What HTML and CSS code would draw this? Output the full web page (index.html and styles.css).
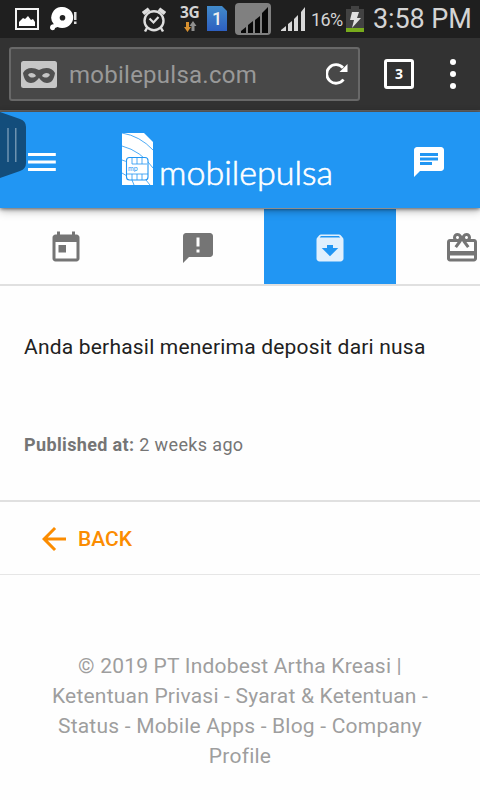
FILE: index.html
```html
<!DOCTYPE html>
<html lang="id">
<head>
<meta charset="utf-8">
<title>mobilepulsa</title>
<link rel="stylesheet" href="styles.css">
</head>
<body>
<div class="status">
  <svg class="s-picture" width="24" height="22" viewBox="0 0 24 22"><path d="M1 1h22v20H1z" fill="none" stroke="#f4f4f4" stroke-width="2"/><path d="M4 18v-4l4-4 2 1 3-3 3 4 2-1 2 3v4z" fill="#fff"/></svg>
  <svg class="s-disc" width="28" height="24" viewBox="0 0 28 24" fill="#fff"><path d="M12.500 0a11 10.500 0 1 1-5 20L5 21c0 3-5 3-5-.5 0-3 3-3.500 4-3A10.500 10.500 0 0 1 12.500 0z"/><circle cx="12.500" cy="10.700" r="2.800" fill="#222"/><path d="M24 5h2.500v8H24zM24 14.500h2.500V17H24z" fill="#ddd"/></svg>
  <svg class="s-alarm" width="24" height="26" viewBox="0 0 24 26" fill="none" stroke="#dedede"><circle cx="12" cy="13.700" r="9.500" stroke-width="2.400"/><path d="M1 6.500l6-4.500M17 2l6 4.500" stroke-width="4"/><path d="M7.500 11.500l4 4 5-5.500" stroke-width="2.200"/><path d="M5 21l-2 3.500M19 21l2 3.500" stroke-width="2.500"/></svg>
  <div class="network"><span>3G</span><svg width="16" height="12" viewBox="0 0 16 12"><path d="M4 1h3v5h2l-3.500 5L2 6h2z" fill="#d9912f"/><path d="M9.500 10h3V5h2L11 0 7.500 5h2z" fill="#909090"/></svg></div>
  <div class="sim">1</div>
  <svg class="s-sigbox" width="36" height="32" viewBox="0 0 36 32"><rect width="36" height="32" rx="4" fill="#808080"/><path d="M6 30v-2l5-4v6zm7 0v-8l5-4v12zm7 0V17l5-4v17zm7 0V10l6-6v26z" fill="#080808"/></svg>
  <svg class="s-signal" width="25" height="24" viewBox="0 0 25 24"><path d="M0 24v-1l5-4v5zm7 0v-7l4-3v10zm6 0V12l4-4v16zm7 0V5l4-5v24z" fill="#d8d8d8"/></svg>
  <span class="percent">16%</span>
  <svg class="s-battery" width="18" height="26" viewBox="0 0 18 26"><path d="M5 0h8v3h5v20H0V3h5z" fill="#424242"/><path d="M0 22h18v4H0z" fill="#78ab1c"/><path d="M6 6h7l-2 6h4L6 22l2-8H4z" fill="#e0e0e0"/></svg>
  <span class="clock">3:58 PM</span>
</div>
<div class="browser">
  <div class="address">
    <svg width="36" height="27" viewBox="0 0 36 27"><rect width="36" height="27" rx="2.500" fill="#c6c6c6"/><path d="M2 12c3-6 10-6 16-3 6-3 13-3 16 3-1 6-3 10-8 10-4 0-6-3-8-5-2 2-4 5-8 5-5 0-7-4-8-10z" fill="#505050"/><path d="M7 14c1-2.500 6-3 8 1-3 2.500-6 2-8-1zm22 0c-1-2.500-6-3-8 1 3 2.500 6 2 8-1z" fill="#c6c6c6"/></svg>
    <span class="url">mobilepulsa.com</span>
    <svg class="reload" width="23" height="22" viewBox="0 0 23 22"><path d="M17.500 16.500A9.300 9.300 0 1 1 17 4.800" fill="none" stroke="#fff" stroke-width="2.800"/><path d="M21.500 1v8h-8z" fill="#fff"/></svg>
  </div>
  <div class="count">3</div>
  <div class="dots"><i></i><i></i><i></i></div>
</div>
<header class="appbar">
  <svg class="drawer" width="27" height="66" viewBox="0 0 27 66"><path d="M0 0l20 7q6 2 6 8v36q0 6-6 8L0 66z" fill="#134d7b"/><path d="M8 16v34M15.800 16v34" stroke="#85a5be" stroke-width="1.200"/></svg>
  <svg class="menu" width="36" height="36" viewBox="0 0 24 24"><path fill="#fff" d="M2.700 18h18.500v-2H2.700v2zm0-5h18.500v-2H2.700v2zm0-7v2h18.500V6H2.700z"/></svg>
  <div class="brand">
    <svg width="32" height="52" viewBox="0 0 32 52"><path d="M0 0h22l9 9v43H0z" fill="#fff"/><g fill="none" stroke="#2196f3" stroke-width=".8"><path d="M0 0q18 3 31 17M0 13q19 5 31 22M0 27q4 1 6 3M0 40l5 3M10 47l2 5M24 47l4 5"/><rect x="4.500" y="24.500" width="21.500" height="22.500" rx="3" fill="#fff" stroke-width="1.100"/><path d="M10 25v6h15M15 25v6M20 25v6M5 41h21M10 41v6M15 41v6M20 41v6"/></g><text x="6" y="37.500" font-family="Lato" font-size="7" fill="#2196f3">mp</text></svg>
    <svg class="wordmark" width="178" height="48" viewBox="0 0 178 48"><text x="0" y="33" textLength="174" lengthAdjust="spacingAndGlyphs" font-family="Lato" font-weight="300" font-size="33" fill="#fff" stroke="#fff" stroke-width=".6">mobilepulsa</text></svg>
  </div>
  <svg class="chat" width="36" height="36" viewBox="0 0 24 24"><path fill="#fff" d="M20 2H4c-1.100 0-1.990.9-1.990 2L2 22l4-4h14c1.100 0 2-.9 2-2V4c0-1.100-.9-2-2-2zM6 9h12v2H6V9zm8 5H6v-2h8v2zm4-6H6V6h12v2z"/></svg>
</header>
<nav class="tabs">
  <div class="tab"><svg viewBox="0 0 24 24"><path d="M19 3h-1V1h-2v2H8V1H6v2H5c-1.110 0-1.990.9-1.990 2L3 19c0 1.100.89 2 2 2h14c1.100 0 2-.9 2-2V5c0-1.100-.9-2-2-2zm0 16H5V8h14v11zM7 10h5v5H7z"/></svg></div>
  <div class="tab"><svg viewBox="0 0 24 24"><path d="M20 2H4c-1.100 0-1.990.9-1.990 2L2 22l4-4h14c1.100 0 2-.9 2-2V4c0-1.100-.9-2-2-2zm-7 9h-2V5h2v6zm0 4h-2v-2h2v2z"/></svg></div>
  <div class="tab active"><svg viewBox="0 0 24 24"><path d="M20.540 5.230l-1.390-1.680C18.880 3.210 18.470 3 18 3H6c-.47 0-.88.21-1.160.55L3.460 5.230C3.170 5.570 3 6.020 3 6.500V19c0 1.100.9 2 2 2h14c1.100 0 2-.9 2-2V6.500c0-.48-.17-.93-.46-1.270zM12 17.500L6.500 12H10v-2h4v2h3.500L12 17.500zM5.120 5l.81-1h12l.94 1H5.120z"/></svg></div>
  <div class="tab last"><svg viewBox="0 0 24 24"><path d="M20 6h-2.180c.11-.31.18-.65.18-1 0-1.660-1.340-3-3-3-1.050 0-1.960.54-2.500 1.350l-.5.67-.5-.68C10.960 2.540 10.050 2 9 2 7.340 2 6 3.340 6 5c0 .35.07.69.18 1H4c-1.110 0-1.990.89-1.990 2L2 19c0 1.110.89 2 2 2h16c1.110 0 2-.89 2-2V8c0-1.110-.89-2-2-2zm-5-2c.55 0 1 .45 1 1s-.45 1-1 1-1-.45-1-1 .45-1 1-1zM9 4c.55 0 1 .45 1 1s-.45 1-1 1-1-.45-1-1 .45-1 1-1zm11 15H4v-2h16v2zm0-5H4V8h5.080L7 10.830 8.620 12 11 8.760l1-1.360 1 1.360L15.380 12 17 10.830 14.920 8H20v6z"/></svg></div>
</nav>
<main class="message">
  <p class="body">Anda berhasil menerima deposit dari nusa</p>
  <p class="published"><b>Published at:</b> 2 weeks ago</p>
</main>
<a class="back"><svg width="36" height="36" viewBox="0 0 24 24"><path fill="#fb8c00" d="M20 11H7.830l5.590-5.590L12 4l-8 8 8 8 1.410-1.410L7.830 13H20v-2z"/></svg><span>BACK</span></a>
<footer class="footer">© 2019 PT Indobest Artha Kreasi |<br>Ketentuan Privasi - Syarat &amp; Ketentuan -<br>Status - Mobile Apps - Blog - Company<br>Profile</footer>
</body>
</html>
```
FILE: styles.css
```css
* { box-sizing: border-box; }
body { margin: 0; width: 480px; height: 800px; overflow: hidden; background: #fefefe; font-family: Roboto, sans-serif; }
svg { display: block; flex: none; }
p { margin: 0; }

.status { display: flex; align-items: flex-start; height: 38px; background: #1f1f1f; color: #d4d4d4; white-space: nowrap; }
.s-picture { margin: 8px 0 0 15px; }
.s-disc { margin: 7px 0 0 11px; }
.s-alarm { margin: 7px 0 0 64px; }
.network { width: 20px; margin: 4px 0 0 14px; font: 700 15.5px/16px "Noto Sans", sans-serif; }
.network span { display: block; letter-spacing: -0.3px; }
.network svg { margin: 1px 0 0 2px; }
.sim { width: 20px; height: 25px; margin: 6px 0 0 7px; background: linear-gradient(#428bcb, #2d5fc0); clip-path: polygon(0 0, 75% 0, 100% 20%, 100% 100%, 0 100%); color: #eee; font: 500 18px/25px Roboto, sans-serif; text-align: center; }
.s-sigbox { margin: 3px 0 0 8px; }
.s-signal { margin: 7px 0 0 10px; }
.percent { width: 34px; margin: 7px 0 0 5px; font-size: 18px; line-height: 26px; letter-spacing: -0.6px; }
.s-battery { margin: 6px 0 0 1px; }
.clock { margin: 3px 0 0 9px; font-size: 27px; line-height: 32px; letter-spacing: -0.1px; }

.browser { display: flex; align-items: center; height: 74px; padding: 0 0 0 9px; background: #323232; border-bottom: 2px solid #646464; }
.address { display: flex; align-items: center; width: 351px; height: 54px; padding-left: 10px; border: 2px solid #686868; border-radius: 3px; background: #484848; }
.url { flex: 1; margin: 2px 0 0 12px; color: #999; font-size: 24px; letter-spacing: 0.25px; }
.reload { margin-right: 9px; }
.count { width: 30px; height: 30px; margin-left: 24px; border: 3px solid #fff; border-radius: 3px; color: #fff; font: 700 14px/24px "Noto Sans", sans-serif; text-align: center; }
.dots { display: grid; gap: 6px; margin-left: 36px; }
.dots i { width: 6px; height: 6px; border-radius: 50%; background: #fff; }

.appbar { position: relative; z-index: 1; display: flex; align-items: flex-start; height: 96px; background: #2196f3; box-shadow: 0 1px 4px rgba(0, 0, 0, 0.55), 0 3px 9px rgba(0, 0, 0, 0.25); }
.drawer { position: absolute; left: 0; top: 0; }
.menu { margin: 32px 0 0 24px; }
.brand { display: flex; width: 216px; margin: 21px 0 0 62px; }
.wordmark { margin: 19px 0 0 5px; }
.chat { margin: 32px 0 0 73px; }

.tabs { display: grid; grid-template-columns: repeat(3, 132px) 84px; height: 78px; padding-top: 1px; border-bottom: 2px solid #e0e0e0; }
.tab { display: grid; place-items: center; height: 75px; padding-top: 3px; fill: #757575; }
.tab svg { width: 36px; height: 36px; }
.tab.active { background: #2196f3; fill: #e1f0fd; }
.tab.last { justify-items: end; }

.message { height: 216px; padding: 45px 24px 0; border-bottom: 2px solid #e0e0e0; }
.body { color: #212121; font-size: 21px; line-height: 32px; letter-spacing: 0.2px; white-space: nowrap; }
.published { margin-top: 68px; color: #757575; font-size: 18px; line-height: 28px; letter-spacing: 0.36px; }
.back { display: flex; align-items: center; height: 73px; padding: 2px 0 0 36px; border-bottom: 1px solid #e6e6e6; color: #fb8c00; font-size: 21px; font-weight: 500; }
.back span { margin-left: 6px; }
.footer { padding-top: 76px; color: #9e9e9e; font-size: 21px; line-height: 30px; letter-spacing: 0.21px; text-align: center; white-space: nowrap; }
```
